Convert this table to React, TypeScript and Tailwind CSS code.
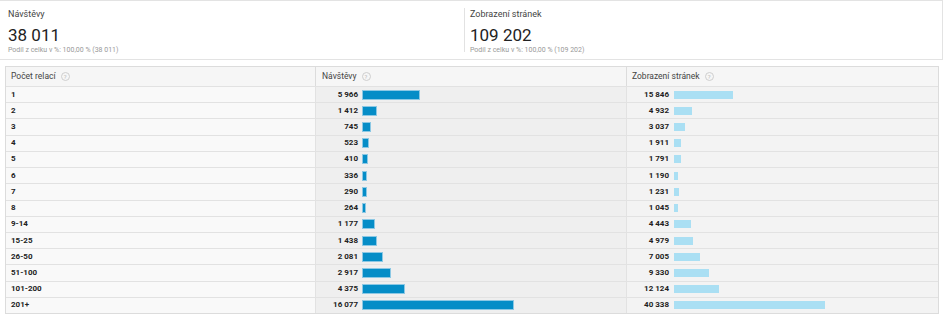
import React from 'react';

const rows: [string, number, number][] = [
  ['1', 5966, 15846],
  ['2', 1412, 4932],
  ['3', 745, 3037],
  ['4', 523, 1911],
  ['5', 410, 1791],
  ['6', 336, 1190],
  ['7', 290, 1231],
  ['8', 264, 1045],
  ['9-14', 1177, 4443],
  ['15-25', 1438, 4979],
  ['26-50', 2081, 7005],
  ['51-100', 2917, 9330],
  ['101-200', 4375, 12124],
  ['201+', 16077, 40338],
];

const fmt = (n: number) => n.toString().replace(/\B(?=(\d{3})+(?!\d))/g, ' ');

const Help = () => (
  <span className="ml-[5px] inline-flex h-[9px] w-[9px] items-center justify-center rounded-full border border-[#cfcfcf] text-[6px] leading-none text-[#bbb]">?</span>
);

const App: React.FC = () => {
  const maxV = 16077;
  const maxP = 40338;
  return (
    <div className="h-[320px] w-[945px] bg-white font-['Roboto',sans-serif]">
      {/* Scorecards */}
      <div className="mr-[2px] flex h-[60px] border-y border-r border-[#e3e3e3] pt-[7px]">
        <div className="w-[464px] pl-[8px]">
          <div className="mt-[1px] text-[9px] leading-[11px] text-[#444]">Návštěvy</div>
          <div className="mt-[6px] text-[17px] leading-[18px] text-[#222]">38 011</div>
          <div className="mt-[2px] text-[7px] leading-[9px] text-[#999]">Podíl z celku v %: 100,00 % (38 011)</div>
        </div>
        <div className="flex h-[44px] flex-1 flex-col border-l border-[#e2e2e2] pl-[5px]">
          <div className="mt-[1px] text-[9px] leading-[11px] text-[#444]">Zobrazení stránek</div>
          <div className="mt-[6px] text-[17px] leading-[18px] text-[#222]">109 202</div>
          <div className="mt-[2px] text-[7px] leading-[9px] text-[#999]">Podíl z celku v %: 100,00 % (109 202)</div>
        </div>
      </div>

      {/* Table */}
      <div className="ml-[5px] mt-[6px] w-[934px] border border-[#dcdcdc] text-[8px] font-bold text-[#222]">
        <div className="flex h-[19px] bg-[#f6f6f6] text-[8.5px] font-normal text-[#444]">
          <div className="flex w-[310px] items-center border-r border-[#dcdcdc] pl-[5px]">Počet relací<Help /></div>
          <div className="flex w-[311px] items-center border-r border-[#dcdcdc] pl-[6px]">Návštěvy<Help /></div>
          <div className="flex flex-1 items-center pl-[5px]">Zobrazení stránek<Help /></div>
        </div>
        {rows.map(([label, v, p]) => (
          <div key={label} className="flex h-[16.23px] border-t border-[#e2e2e2]">
            <div className="flex w-[310px] items-center border-r border-[#e2e2e2] bg-[#f9f9f9] pl-[5px]">{label}</div>
            <div className="flex w-[311px] items-center border-r border-[#e2e2e2] bg-[#efefef]">
              <span className="w-[42px] text-right">{fmt(v)}</span>
              <span className="ml-[5px] h-[8px] bg-[#058dc7] ring-1 ring-[#8cc8e4]" style={{ width: `${(v / maxV) * 150}px` }} />
            </div>
            <div className="flex flex-1 items-center bg-[#f3f3f3]">
              <span className="w-[42px] text-right">{fmt(p)}</span>
              <span className="ml-[5px] h-[8px] bg-[#aadff3]" style={{ width: `${(p / maxP) * 151}px` }} />
            </div>
          </div>
        ))}
      </div>
    </div>
  );
};

export default App;
